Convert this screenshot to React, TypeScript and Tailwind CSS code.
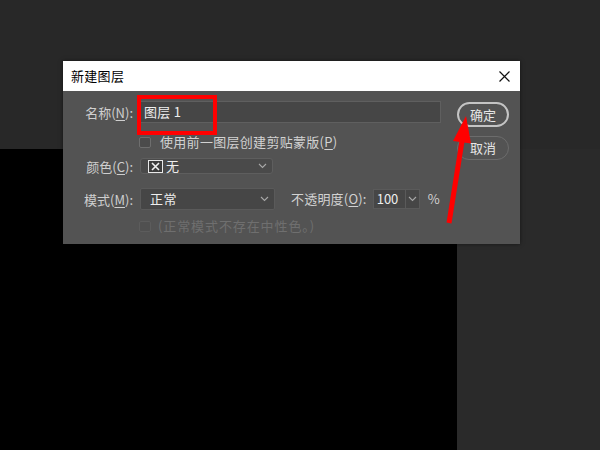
import React from "react";

const font = { fontFamily: '"Noto Sans CJK SC", "Noto Sans", sans-serif' };

function Chevron({ className = "" }: { className?: string }) {
  return (
    <svg width="9" height="6" viewBox="0 0 9 6" className={className}>
      <path d="M1 1 L4.5 4.5 L8 1" fill="none" stroke="#a8a8a8" strokeWidth="1.1" />
    </svg>
  );
}

function Label({ pre, k }: { pre: string; k: string }) {
  return (
    <div className="w-[71px] shrink-0 text-right text-[13px] text-[#cfcfcf] leading-none pr-[1px]">
      {pre}(<span className="underline underline-offset-2">{k}</span>):
    </div>
  );
}

export default function App() {
  return (
    <div className="relative w-[600px] h-[450px] overflow-hidden bg-[#282828] flex flex-col" style={font}>
      <div className="h-[149px] shrink-0" />
      <div className="flex flex-1">
        <div className="w-[457px] bg-black" />
        <div className="flex-1 bg-[#2a2a2a]" />
      </div>

      {/* Dialog */}
      <div className="absolute left-[63px] top-[61px] w-[457px] h-[183px] flex flex-col shadow-[0_0_4px_rgba(0,0,0,0.5)]">
        <div className="h-[30px] bg-white flex items-center justify-between pl-[8px] pr-[10px]">
          <span className="text-[13px] text-black tracking-[0.3px]">新建图层</span>
          <svg width="11" height="11" viewBox="0 0 11 11">
            <path d="M0.5 0.5 L10.5 10.5 M10.5 0.5 L0.5 10.5" stroke="#111" strokeWidth="1.2" />
          </svg>
        </div>
        <div className="flex-1 bg-[#535353] flex">
          <div className="flex-1 flex flex-col pt-[10px]">
            {/* Row 1 */}
            <div className="flex items-center h-[22px]">
              <Label pre="名称" k="N" />
              <div className="ml-[6px] w-[301px] h-[22px] bg-[#464646] border border-[#5f5f5f] flex items-center pl-[3px] text-[13px] text-[#eeeeee] tracking-[0.3px]">
                图层 1
              </div>
            </div>
            {/* Row 2 */}
            <div className="flex items-center h-[16px] mt-[11px] pl-[76px]">
              <div className="w-[12px] h-[11px] rounded-[2px] border border-[#6e6e6e] bg-[#4b4b4b]" />
              <span className="ml-[9px] text-[13px] text-[#d2d2d2] tracking-[0.3px]">
                使用前一图层创建剪贴蒙版(<span className="underline underline-offset-2">P</span>)
              </span>
            </div>
            {/* Row 3 */}
            <div className="flex items-center h-[16px] mt-[8px]">
              <Label pre="颜色" k="C" />
              <div className="ml-[6px] w-[133px] h-[16px] rounded-[3px] bg-[#4a4a4a] border border-[#5e5e5e] flex items-center pl-[7px] pr-[5px]">
                <div className="w-[15px] h-[13px] border border-[#e8e8e8] bg-[#3c3c3c] flex items-center justify-center">
                  <svg width="9" height="9" viewBox="0 0 9 9">
                    <path d="M1 1 L8 8 M8 1 L1 8" stroke="#f0f0f0" strokeWidth="1.6" />
                  </svg>
                </div>
                <span className="ml-[3px] text-[13px] text-[#eeeeee]">无</span>
                <Chevron className="ml-auto" />
              </div>
            </div>
            {/* Row 4 */}
            <div className="flex items-center h-[22px] mt-[14px]">
              <Label pre="模式" k="M" />
              <div className="ml-[6px] w-[135px] h-[22px] rounded-[2px] bg-[#464646] border border-[#5a5a5a] flex items-center pl-[9px] pr-[5px]">
                <span className="text-[13px] text-[#eeeeee] tracking-[0.5px]">正常</span>
                <Chevron className="ml-auto" />
              </div>
              <span className="ml-[16px] text-[13px] text-[#d2d2d2] tracking-[0.2px]">
                不透明度(<span className="underline underline-offset-2">O</span>):
              </span>
              <div className="ml-[6px] w-[47px] h-[20px] bg-[#464646] border border-[#5a5a5a] flex items-center">
                <span className="pl-[3px] w-[31px] text-[13px] text-[#eeeeee]">100</span>
                <div className="w-px self-stretch bg-[#5a5a5a]" />
                <div className="flex-1 flex items-center justify-center">
                  <Chevron />
                </div>
              </div>
              <span className="ml-[8px] text-[13px] text-[#d2d2d2]">%</span>
            </div>
            {/* Row 5 */}
            <div className="flex items-center h-[16px] mt-[8px] pl-[76px]">
              <div className="w-[12px] h-[11px] rounded-[2px] border border-[#5c5c5c] bg-[#505050]" />
              <span className="ml-[7px] text-[13px] text-[#6f6f6f] tracking-[0.9px]">(正常模式不存在中性色。)</span>
            </div>
          </div>
          <div className="w-[52px] mr-[11px] flex flex-col pt-[11px] gap-[9px]">
            <div className="h-[25px] rounded-full border-2 border-[#c4c4c4] flex items-center justify-center text-[13px] text-[#e6e6e6]">
              确定
            </div>
            <div className="h-[24px] rounded-full border-[1.5px] border-[#6c6c6c] flex items-center justify-center text-[13px] text-[#e6e6e6]">
              取消
            </div>
          </div>
        </div>
      </div>

      {/* Red highlight rectangle */}
      <div className="absolute left-[137px] top-[95px] w-[80px] h-[40px] border-4 border-[#ff0000]" />

      {/* Red arrow */}
      <svg className="absolute left-0 top-0" width="600" height="450" viewBox="0 0 600 450">
        <line x1="449" y1="223" x2="462.5" y2="138" stroke="#ff0000" strokeWidth="5" />
        <polygon points="466,116 453,141 471,143.5" fill="#ff0000" />
      </svg>
    </div>
  );
}
